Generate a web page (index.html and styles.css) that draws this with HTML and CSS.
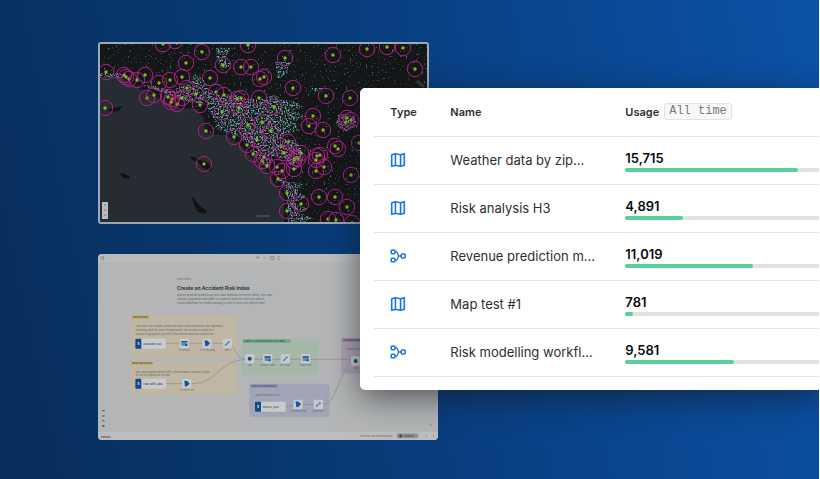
FILE: index.html
```html
<!DOCTYPE html>
<html lang="en">
<head>
<meta charset="utf-8">
<meta name="viewport" content="width=device-width, initial-scale=1">
<title>Usage overview</title>
<link rel="stylesheet" href="styles.css">
</head>
<body>
<svg class="symbols" aria-hidden="true">
  <symbol id="icon-map" viewBox="0 0 16 16"><path d="M1.7 2.8 5.4 1.7 10.6 2.8 14.3 1.7V13.2L10.6 14.3 5.4 13.2 1.7 14.3ZM5.4 1.7V13.2M10.6 2.8V14.3" fill="none" stroke="currentColor" stroke-width="1.6" stroke-linejoin="round"/></symbol>
  <symbol id="icon-flow" viewBox="0 0 16 16"><g fill="none" stroke="currentColor" stroke-width="1.6"><rect x="1.2" y="2" width="3.8" height="3.8" rx="1"/><rect x="1.2" y="10.2" width="3.8" height="3.8" rx="1"/><rect x="11.2" y="6" width="4" height="4" rx="1"/><path d="M5 3.7H6Q7.6 4 7.8 6L8.5 8 7.8 10Q7.6 12 6 12.3H5M8.5 8H11.2" stroke-width="1.3"/></g></symbol>
</svg>
<main class="stage">
  <div class="previews">
    <figure class="map">
      <svg viewBox="100 44 327 178" role="img" aria-label="Coastal risk map">
        <defs>
          <filter id="speckle" x="0" y="0" width="100%" height="100%" color-interpolation-filters="sRGB"><feTurbulence type="fractalNoise" baseFrequency="0.6" numOctaves="3" seed="4"/><feColorMatrix values="0 0 0 0 0.42  0 0 0 0 0.63  0 0 0 0 0.64  5 0 0 0 -2.3"/><feComposite in2="SourceGraphic" operator="in"/></filter>
          <filter id="sparse" x="0" y="0" width="100%" height="100%" color-interpolation-filters="sRGB"><feTurbulence type="fractalNoise" baseFrequency="0.5" numOctaves="2" seed="9"/><feColorMatrix values="0 0 0 0 0.3  0 0 0 0 0.46  0 0 0 0 0.48  8 0 0 0 -5.3"/><feComposite in2="SourceGraphic" operator="in"/></filter>
          <g id="spot"><circle r="7.7" fill="none" stroke="#ae1f84" stroke-width="1"/><circle r="1.7" fill="#9aaa2e"/></g>
        </defs>
        <path fill="#151617" d="M98 42h331v182H98z"/>
        <path fill="#262c31" d="M98 77 120 77 140 89 160 99 180 108 197 109 204 120 206 134 226 135 240 145 252 158 266 170 276 185 284 195 284 224H98Z"/>
        <path fill="#101214" d="m120 174 3-1 7 4-1 2-6-1zM190 157l4 0 5 3 8 2 5 6-1 3-8-3-5-6-6-2zM191 195l3 4 7 8 6 4-2 3-7-2-4-7zM108 109l10-2 4-1-3 5-9 1z"/>
        <g filter="url(#speckle)">
          <path d="M99 73h22l6 4-10 1-18-2zM140 85l16 1 14 5 18-7 8-12 8 8 4 9 12 6 14-1 12 5h15l14-4 8 5 12 1 8 6-10 4 14 6-12 4 4 10-12 2-9 8 4 9 12-3 8 6-12 8-16-5-8 1-10-8-14-10-14-6-12-4-4-14-6-10-18-3-20-7z"/>
          <path d="M216 48h15l-5 9 5 8-9 5-5-9zM275 62h16l-4 11-9 6zM310 88h14l-8 4zM338 115h16l4 12-14 5-8-8zM282 138l14 3 8 10-4 12-10 2-10-12zM278 178l10 4 16 2-6 7 8 6-12 6 14 6-10 4 14 5-10 5h-14l-1-27zM252 148l10 6 10 8-4 6-14-12z"/>
        </g>
        <path filter="url(#sparse)" d="M98 42h331v182H284v-29l-8-10-24-27-26-23-20-1-8-24-38-10-20-10-20-12H98z"/>
        <g>
          <use href="#spot" x="163" y="44"/><use href="#spot" x="175" y="41"/><use href="#spot" x="202" y="52"/><use href="#spot" x="248" y="45"/><use href="#spot" x="186" y="63"/><use href="#spot" x="223" y="65"/><use href="#spot" x="241" y="67"/><use href="#spot" x="251" y="67"/><use href="#spot" x="106" y="72"/><use href="#spot" x="124" y="75"/><use href="#spot" x="126" y="77"/><use href="#spot" x="129" y="79"/><use href="#spot" x="137" y="80"/><use href="#spot" x="145" y="75"/><use href="#spot" x="159" y="83"/><use href="#spot" x="170" y="80"/><use href="#spot" x="182" y="77"/><use href="#spot" x="210" y="78"/><use href="#spot" x="260" y="79"/><use href="#spot" x="264" y="77"/><use href="#spot" x="187" y="88"/><use href="#spot" x="147" y="98"/><use href="#spot" x="154" y="95"/><use href="#spot" x="168" y="97"/><use href="#spot" x="172" y="99"/><use href="#spot" x="171" y="102"/><use href="#spot" x="177" y="104"/><use href="#spot" x="182" y="98"/><use href="#spot" x="196" y="94"/><use href="#spot" x="200" y="105"/><use href="#spot" x="216" y="92"/><use href="#spot" x="224" y="95"/><use href="#spot" x="241" y="98"/><use href="#spot" x="237" y="99"/><use href="#spot" x="239" y="108"/><use href="#spot" x="259" y="98"/><use href="#spot" x="222" y="112"/><use href="#spot" x="248" y="125"/><use href="#spot" x="262" y="122"/><use href="#spot" x="206" y="131"/><use href="#spot" x="105" y="108"/>
          <use href="#spot" x="285" y="58"/><use href="#spot" x="333" y="55"/><use href="#spot" x="367" y="49"/><use href="#spot" x="387" y="47"/><use href="#spot" x="403" y="48"/><use href="#spot" x="415" y="69"/><use href="#spot" x="293" y="88"/><use href="#spot" x="326" y="96"/><use href="#spot" x="350" y="98"/><use href="#spot" x="274" y="107"/><use href="#spot" x="313" y="116"/><use href="#spot" x="309" y="126"/><use href="#spot" x="323" y="130"/><use href="#spot" x="347" y="118"/><use href="#spot" x="351" y="120"/><use href="#spot" x="346" y="122"/><use href="#spot" x="271" y="131"/>
          <use href="#spot" x="234" y="137"/><use href="#spot" x="247" y="145"/><use href="#spot" x="257" y="140"/><use href="#spot" x="253" y="154"/><use href="#spot" x="262" y="161"/><use href="#spot" x="264" y="157"/><use href="#spot" x="267" y="166"/><use href="#spot" x="204" y="164"/><use href="#spot" x="288" y="142"/><use href="#spot" x="281" y="146"/><use href="#spot" x="284" y="153"/><use href="#spot" x="335" y="146"/><use href="#spot" x="338" y="149"/><use href="#spot" x="295" y="158"/><use href="#spot" x="298" y="159"/><use href="#spot" x="294" y="161"/><use href="#spot" x="301" y="153"/><use href="#spot" x="317" y="156"/><use href="#spot" x="320" y="155"/><use href="#spot" x="316" y="160"/><use href="#spot" x="324" y="167"/><use href="#spot" x="316" y="171"/><use href="#spot" x="294" y="169"/><use href="#spot" x="277" y="167"/><use href="#spot" x="282" y="171"/><use href="#spot" x="278" y="179"/><use href="#spot" x="351" y="175"/><use href="#spot" x="287" y="193"/><use href="#spot" x="319" y="197"/><use href="#spot" x="335" y="197"/><use href="#spot" x="301" y="204"/><use href="#spot" x="347" y="207"/><use href="#spot" x="287" y="211"/><use href="#spot" x="328" y="219"/><use href="#spot" x="336" y="220"/><use href="#spot" x="359" y="143"/><use href="#spot" x="352" y="223"/>
        </g>
        <path d="m417 81 7 6" stroke="#34383a" stroke-width="3"/>
        <path fill="#b9bcbb" d="M102 202h6v17h-6z"/><path d="M104 205h2M104 210h2M104 215h2" stroke="#777" stroke-width="1"/>
        <path d="M257 216h13" stroke="#6c7477" stroke-width="2" stroke-dasharray="2 1" opacity=".6"/>
      </svg>
    </figure>
    <figure class="workflow">
      <svg viewBox="0 0 1020 558" role="img" aria-label="Accident risk workflow">
        <defs>
          <g id="node"><rect x="-14" y="-14" width="28" height="28" rx="4" fill="#c6c9cd"/></g>
          <g id="play"><use href="#node"/><path d="M-7-9 2-8 9 0 2 7-5 9Z" fill="#15539c"/></g>
          <g id="grid"><use href="#node"/><path d="M-9-7H9V7H-9Z" fill="#6889b0"/><path d="M-9-7H9v4H-9zM2 2h7v6H2z" fill="#1e5ca5"/></g>
          <g id="disc"><use href="#node"/><circle r="6" fill="#1c4878"/></g>
          <g id="link"><use href="#node"/><path d="M-6 6 5-5M-7 3l4 4M3-6l4 4" stroke="#5c83ae" stroke-width="4" fill="none"/></g>
          <g id="source"><rect width="92" height="30" rx="3" fill="#c8cbcd"/><path d="M3 0h15v30H3a3 3 0 0 1-3-3V3a3 3 0 0 1 3-3z" fill="#154a88"/><path d="M7 10h5v9H7z" fill="#9ab3ce"/></g>
        </defs>
        <path fill="#b3b5b6" d="M0 0h1020v558H0z"/><path fill="#b8babb" d="M0 0h1020v26H0z"/><path fill="#bbbdbe" d="M0 534h1020v24H0z"/>
        <path d="M9 8v8" stroke="#9c5f47" stroke-width="2"/><path d="M13 8h4v8h-4" stroke="#6a6c6d" stroke-width="2" fill="none"/>
        <g stroke="#838586" stroke-width="2" fill="none"><path d="m480 14-5-4 5-3m-4 3h8v4M497 12h7M517 7h11v10h-11zM519 11h7M547 7h-7v10h7"/></g>
        <text x="237" y="79" class="tiny">Description</text>
        <text x="237" y="109" class="chart-title">Create an Accident Risk Index</text>
        <g class="small">
          <text x="237" y="127">Quickly analyze incidents on local road networks to the kth safest, use road</text>
          <text x="237" y="139">crashes, population and traffic to create an index for each cell area or</text>
          <text x="237" y="151">collect data from the shared catalog in order to rerun the steps in time</text>
        </g>
        <rect x="96" y="182" width="323" height="130" rx="6" fill="#c0b6a4"/><path fill="#c1aa65" d="M102 184h49v10h-49z"/>
        <rect x="96" y="320" width="323" height="102" rx="6" fill="#c0b6a4"/><path fill="#c1aa65" d="M100 323h64v10h-64z"/>
        <rect x="432" y="256" width="231" height="107" rx="6" fill="#a4b7a8"/><path fill="#74ad85" d="M435 256h143v11H435z"/>
        <rect x="729" y="253" width="200" height="106" rx="6" fill="#aaa1b2"/><path fill="#9c80ae" d="M733 253h120v11H733z"/>
        <rect x="454" y="389" width="240" height="100" rx="6" fill="#a1a5b6"/><path fill="#8992b6" d="M458 391h82v10h-82z"/>
        <g class="label strong"><text x="104" y="191">LOCATION DATA</text><text x="102" y="330">ROAD TRAFFIC DATA</text><text x="438" y="264">COMPUTE ACCIDENT RISK BY CELL INDEX</text><text x="737" y="261">ACCIDENT RISK INDEX</text><text x="460" y="398">SPATIAL FEATURES DATA</text></g>
        <g class="note"><text x="113" y="220">This source has crashes, people and roads in the chosen area, with a geometry</text><text x="113" y="230">delivering values for those neighborhoods, the risk index is based on it.</text><text x="113" y="244">Group by a geographic grid cell to find the best rates and compute risk</text><text x="113" y="357">Each road segment and its traffic, after the area is indexed to a grid</text><text x="113" y="367">by cell to compute the risk rate.</text><text x="471" y="425">Spatial features by cell</text><text x="746" y="288">Normalize index</text></g>
        <g fill="none" stroke="#8b8d8c" stroke-width="2"><path d="M204 268h185q15 0 24 25 10 22 34 22M204 389h62M280 389c80 0 75-65 160-73h335M561 458q20 1 28-7h72M675 451c45 0 45-113 98-127"/></g>
        <use href="#source" x="112" y="254"/><use href="#source" x="112" y="374"/><use href="#source" x="471" y="443"/>
        <g class="note strong"><text x="136" y="272">ACCIDENTS_da...</text><text x="136" y="392">road_traffic_data</text><text x="494" y="461">SPATIAL_FEAT...</text></g>
        <use href="#grid" x="259" y="268"/><use href="#play" x="327" y="268"/><use href="#link" x="388" y="268"/><use href="#play" x="266" y="389"/>
        <use href="#disc" x="455" y="314"/><use href="#grid" x="509" y="314"/><use href="#link" x="562" y="314"/><use href="#grid" x="623" y="314"/><use href="#disc" x="773" y="321"/><use href="#play" x="600" y="451"/><use href="#link" x="661" y="451"/>
        <g class="label centered"><text x="259" y="291">H3 GeoPoint</text><text x="327" y="291">H3 Polyfill Geog</text><text x="388" y="291">Select</text><text x="266" y="412">H3 Polyfill Line</text><text x="455" y="336">Join</text><text x="509" y="336">Group by Index</text><text x="562" y="336">Risk Count</text><text x="623" y="336">Create Index</text><text x="773" y="345">Join</text><text x="600" y="474">H3 from GeoPoint</text><text x="661" y="474">Get Counts</text></g>
        <g stroke="#505354" stroke-width="3"><path d="M12 470h8M12 486h8M13 500h6M12 516h8M16 513v6"/></g>
        <text x="9" y="552" class="small strong">Results</text><text x="786" y="549" class="note">Workflow last executed today</text>
        <rect x="896" y="538" width="65" height="15" rx="4" fill="#939697"/><circle cx="908" cy="546" r="5" fill="#484c4f"/><text x="917" y="549" class="label strong">Completed</text>
        <path d="m993 508 8 8M984 545h3M1005 545h3" stroke="#66696b" stroke-width="2"/>
      </svg>
    </figure>
  </div>
  <section class="card">
    <table>
      <thead><tr><th class="type" scope="col">Type</th><th class="name" scope="col">Name</th><th scope="col"><div class="usage">Usage <span class="period">All time</span></div></th></tr></thead>
      <tbody>
        <tr><td><svg class="icon" role="img" aria-label="Map"><use href="#icon-map"/></svg></td><td class="name">Weather data by zip...</td><td><strong>15,715</strong><div class="track"><div class="fill" style="width:89%"></div></div></td></tr>
        <tr><td><svg class="icon" role="img" aria-label="Map"><use href="#icon-map"/></svg></td><td class="name">Risk analysis H3</td><td><strong>4,891</strong><div class="track"><div class="fill" style="width:30%"></div></div></td></tr>
        <tr><td><svg class="icon" role="img" aria-label="Workflow"><use href="#icon-flow"/></svg></td><td class="name">Revenue prediction m...</td><td><strong>11,019</strong><div class="track"><div class="fill" style="width:66%"></div></div></td></tr>
        <tr><td><svg class="icon" role="img" aria-label="Map"><use href="#icon-map"/></svg></td><td class="name">Map test #1</td><td><strong>781</strong><div class="track"><div class="fill" style="width:4%"></div></div></td></tr>
        <tr><td><svg class="icon" role="img" aria-label="Workflow"><use href="#icon-flow"/></svg></td><td class="name">Risk modelling workfl...</td><td><strong>9,581</strong><div class="track"><div class="fill" style="width:56%"></div></div></td></tr>
      </tbody>
    </table>
  </section>
</main>
</body>
</html>
```
FILE: styles.css
```css
* { box-sizing: border-box; }
body { margin: 0; background: #fff; font-family: Inter, "Liberation Sans", sans-serif; color: #2c3032; }
.symbols { position: absolute; width: 0; height: 0; }
.stage {
  position: relative;
  min-height: 100vh;
  margin-right: 1px;
  padding: 42px 0 39px 12%;
  overflow: hidden;
  background: linear-gradient(78deg, #072e5a 0%, #083a76 40%, #0a4a97 80%, #0b52a7 100%);
}
.previews { display: flex; flex-direction: column; gap: 30px; }
figure { margin: 0; overflow: hidden; border-radius: 4px; }
figure svg { display: block; width: 100%; }
.map { width: 46%; max-width: 331px; border: 2px solid #9aabb6; border-radius: 3px; }
.workflow { width: 48%; max-width: 340px; }
.label { font-size: 6px; fill: #66696a; }
.note { font-size: 7px; fill: #66696a; }
.tiny { font-size: 8px; fill: #66696a; }
.small { font-size: 8px; fill: #5f6263; }
.strong { font-weight: 600; fill: #454a4c; }
.centered { text-anchor: middle; }
.chart-title { font-size: 15px; font-weight: 700; fill: #35393b; }
.card {
  position: absolute;
  top: 88px;
  left: 44%;
  right: 0;
  padding: 0 0 13px 14px;
  background: #fff;
  border-radius: 5px 0 0 5px;
  box-shadow: 0 8px 32px rgba(20, 24, 28, 0.6);
}
table { width: 100%; border-collapse: collapse; table-layout: fixed; }
tr { height: 48px; border-bottom: 1px solid #e1e3e4; }
th { padding: 0; text-align: left; font-size: 11px; line-height: 16px; font-weight: 600; }
td { padding: 0; vertical-align: middle; }
th.type { width: 76px; padding-left: 16px; }
th.name { width: 175px; }
td:first-child { padding-left: 16px; }
td.name { font-size: 13px; line-height: 20px; white-space: nowrap; }
.icon { display: block; width: 16px; height: 16px; color: #1878dc; }
.usage { display: flex; align-items: center; gap: 5px; }
.period {
  padding: 0 4px;
  border: 1px solid #e1e2e3;
  border-radius: 3px;
  background: #f8f8f8;
  color: #777b7c;
  font: 12px/15px "Liberation Mono", monospace;
}
strong { display: block; padding-top: 2px; color: #090b0c; font-size: 13px; line-height: 16px; font-weight: 600; }
.track { height: 4px; margin-top: 2px; border-radius: 2px 0 0 2px; background: #e1e3e3; }
.fill { height: 100%; border-radius: 2px; background: #55d299; }
```
